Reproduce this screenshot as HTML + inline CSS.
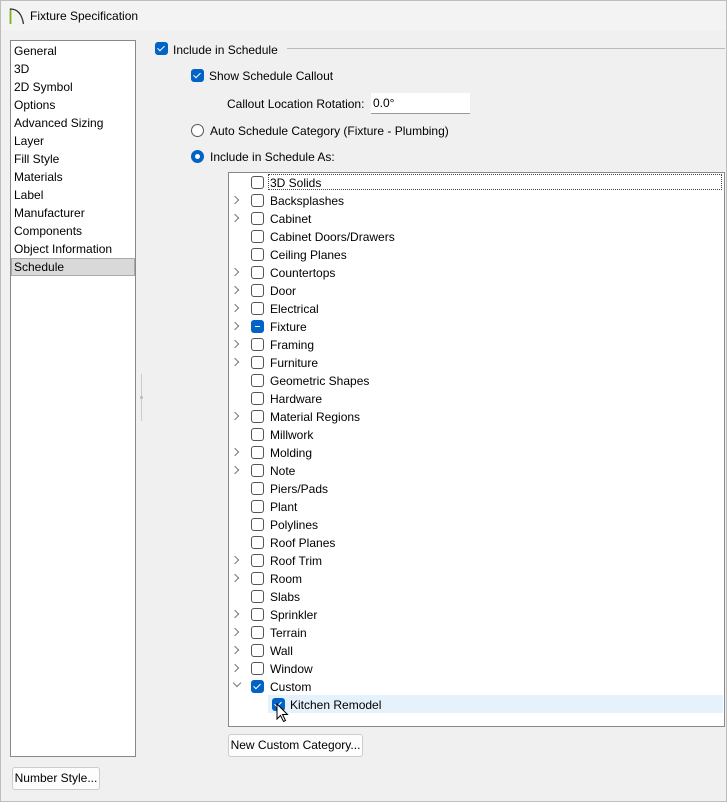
<!DOCTYPE html>
<html><head><style>
*{box-sizing:border-box;margin:0;padding:0}
body{width:727px;height:802px;background:#f0f0f0;font-family:"Liberation Sans",sans-serif;font-size:12px;color:#000;position:relative;overflow:hidden}
.a{position:absolute;white-space:nowrap}
.cb{position:absolute;width:13px;height:13px;border:1px solid #555;border-radius:3px;background:#fff}
.cb.on{background:#0063c5;border-color:#0063c5}
.cb.on:after{content:"";position:absolute;left:3px;top:1px;width:3px;height:6px;border:solid #fff;border-width:0 1.3px 1.3px 0;transform:rotate(45deg)}
.cb.ind{background:#0063c5;border-color:#0063c5}
.cb.ind:after{content:"";position:absolute;left:3px;top:5px;width:5px;height:1.3px;background:#fff}
.chev{position:absolute;width:6px;height:6px;border:solid #777;border-width:1px 1px 0 0;transform:rotate(45deg)}
.btn{position:absolute;background:#fdfdfd;border:1px solid #ccc;border-radius:3px;text-align:center;line-height:20px}
</style></head><body>
<div class="a" style="left:0;top:0;width:727px;height:31px;background:#f3f3f3"></div>
<div class="a" style="left:0;top:0;width:727px;height:802px;border:1px solid #bdbdbd"></div>
<svg class="a" style="left:9px;top:7px" width="16" height="18"><path d="M1.5 17V2 Q12 2 14.5 17" fill="none" stroke="#333" stroke-width="1.3"/><path d="M1.5 17V3" stroke="#7ab800" stroke-width="1.5"/></svg>
<div class="a" style="left:30px;top:9px">Fixture Specification</div>

<div class="a" style="left:10px;top:40px;width:126px;height:717px;background:#fff;border:1px solid #888"></div>
<div class="a" style="left:11px;top:258px;width:124px;height:18px;background:#d9d9d9;border:1px solid #aaa"></div>
<div id="nav"></div>
<div class="a" style="left:141px;top:374px;width:1px;height:47px;background:#ccc"></div>
<div class="a" style="left:140px;top:396px;width:3px;height:3px;background:#bbb;border-radius:50%"></div>

<div class="cb on" style="left:155px;top:42px"></div>
<div class="a" style="left:173px;top:43px">Include in Schedule</div>
<div class="a" style="left:287px;top:48px;width:438px;height:1px;background:#bbb"></div>
<div class="cb on" style="left:191px;top:69px"></div>
<div class="a" style="left:209px;top:69px">Show Schedule Callout</div>
<div class="a" style="left:227px;top:97px">Callout Location Rotation:</div>
<div class="a" style="left:371px;top:93px;width:99px;height:21px;background:#fff;border-bottom:1px solid #999;padding:3px 2px">0.0°</div>
<div class="a" style="left:191px;top:124px;width:13px;height:13px;border:1px solid #555;border-radius:50%;background:#fff"></div>
<div class="a" style="left:210px;top:124px">Auto Schedule Category (Fixture - Plumbing)</div>
<div class="a" style="left:191px;top:150px;width:13px;height:13px;border-radius:50%;background:#0063c5"><div style="position:absolute;left:4px;top:4px;width:5px;height:5px;border-radius:50%;background:#fff"></div></div>
<div class="a" style="left:210px;top:150px">Include in Schedule As:</div>

<div class="a" style="left:228px;top:172px;width:497px;height:555px;background:#fff;border:1px solid #888"></div>
<div class="a" style="left:268px;top:174px;width:454px;height:16px;border:1px dotted #444"></div>
<div class="a" style="left:268px;top:695px;width:455px;height:18px;background:#e5f1fb"></div>
<div id="tree"></div>
<svg class="a" style="left:276px;top:703px" width="14" height="22"><path d="M1 1v15l3.5-3.5 3 6 2-1-3-6h5z" fill="#fff" stroke="#000" stroke-width="1"/></svg>

<div class="btn" style="left:228px;top:734px;width:135px;height:23px">New Custom Category...</div>
<div class="btn" style="left:12px;top:767px;width:88px;height:23px">Number Style...</div>
<script>
var nav=["General","3D","2D Symbol","Options","Advanced Sizing","Layer","Fill Style","Materials","Label","Manufacturer","Components","Object Information","Schedule"];
var h="";nav.forEach(function(n,i){h+='<div class="a" style="left:14px;top:'+(44+18*i)+'px">'+n+'</div>'});
document.getElementById("nav").innerHTML=h;
var t=[["3D Solids",0],["Backsplashes",1],["Cabinet",1],["Cabinet Doors/Drawers",0],["Ceiling Planes",0],["Countertops",1],["Door",1],["Electrical",1],["Fixture",1,"ind"],["Framing",1],["Furniture",1],["Geometric Shapes",0],["Hardware",0],["Material Regions",1],["Millwork",0],["Molding",1],["Note",1],["Piers/Pads",0],["Plant",0],["Polylines",0],["Roof Planes",0],["Roof Trim",1],["Room",1],["Slabs",0],["Sprinkler",1],["Terrain",1],["Wall",1],["Window",1],["Custom",2,"on"]];
h="";t.forEach(function(r,i){var y=173+18*i;
if(r[1]==1)h+='<div class="chev" style="left:232px;top:'+(y+6)+'px"></div>';
if(r[1]==2)h+='<div class="chev" style="left:234px;top:'+(y+3)+'px;transform:rotate(135deg)"></div>';
h+='<div class="cb '+(r[2]||"")+'" style="left:251px;top:'+(y+3)+'px"></div><div class="a" style="left:270px;top:'+(y+3)+'px">'+r[0]+'</div>'});
h+='<div class="cb on" style="left:272px;top:698px"></div><div class="a" style="left:290px;top:698px">Kitchen Remodel</div>';
document.getElementById("tree").innerHTML=h;
</script>
</body></html>
